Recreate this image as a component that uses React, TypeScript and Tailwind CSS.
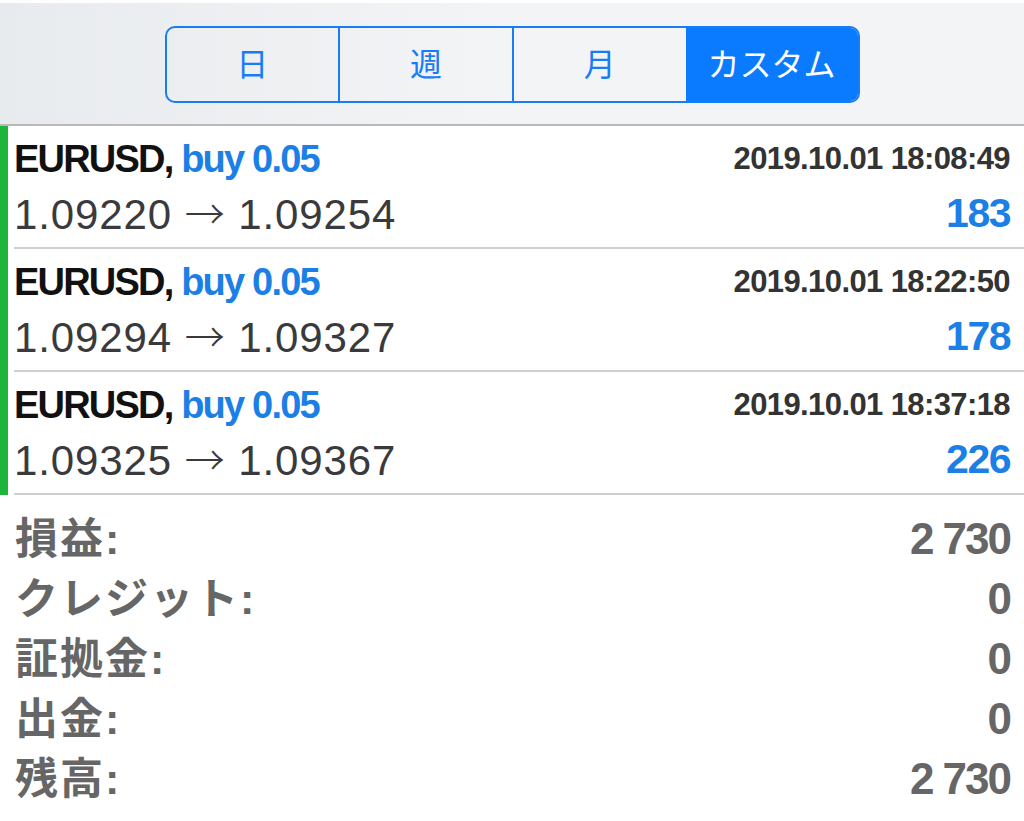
const trades = [
  { time: "2019.10.01 18:08:49", open: "1.09220", close: "1.09254", profit: "183" },
  { time: "2019.10.01 18:22:50", open: "1.09294", close: "1.09327", profit: "178" },
  { time: "2019.10.01 18:37:18", open: "1.09325", close: "1.09367", profit: "226" },
];

const summary = [
  { label: "損益:", value: "2 730" },
  { label: "クレジット:", value: "0" },
  { label: "証拠金:", value: "0" },
  { label: "出金:", value: "0" },
  { label: "残高:", value: "2 730" },
];

const tabs = ["日", "週", "月", "カスタム"];

const font = "font-['Liberation_Sans','Noto_Sans_CJK_JP',sans-serif]";

export default function App() {
  return (
    <div className={`w-[1024px] h-[821px] bg-white overflow-hidden ${font}`}>
      <div className="h-[126px] border-t-[3px] border-white bg-gradient-to-r from-[#e8ebee] via-[#f3f4f6] to-[#f3f4f6] border-b-2 border-b-[#b9b9bb] flex items-center justify-center">
        <div className="flex w-[695px] h-[77px] mt-[2px] rounded-[10px] border-2 border-[#1a7cf4] overflow-hidden">
          {tabs.map((t, i) => (
            <div
              key={t}
              className={`flex-1 flex items-center justify-center text-[32px] ${
                i === 3 ? "bg-[#0a7bff] text-white" : "text-[#1a7cf4]"
              } ${i > 0 && i < 3 ? "border-l-2 border-[#1a7cf4]" : ""}`}
            >
              {t}
            </div>
          ))}
        </div>
      </div>

      <div>
        {trades.map((tr) => (
          <div key={tr.time} className="flex h-[123px]">
            <div className="w-[8px] bg-[#1fb53a]" />
            <div className="flex-1 ml-[6px] pr-[14px] border-b-2 border-[#cfcfd1] flex flex-col justify-center gap-[12px]">
              <div className="flex items-center justify-between h-[42px]">
                <span className="text-[38px] font-bold tracking-[-1.8px] text-[#111]">
                  EURUSD, <span className="text-[#1b7fe6]">buy 0.05</span>
                </span>
                <span className="text-[31px] font-bold tracking-[-0.6px] text-[#333]">{tr.time}</span>
              </div>
              <div className="flex items-center justify-between h-[42px]">
                <span className="text-[42px] text-[#3a3a3c] tracking-[0.9px]">
                  {tr.open}{" "}
                  <span className="font-['Noto_Sans_CJK_JP',sans-serif] text-[40px] font-light">→</span>{" "}
                  {tr.close}
                </span>
                <span className="text-[41px] font-bold tracking-[-1.5px] text-[#1b7fe6]">{tr.profit}</span>
              </div>
            </div>
          </div>
        ))}
      </div>

      <div className="pt-[14px] pl-[15px] pr-[14px]">
        {summary.map((s) => (
          <div key={s.label} className="flex items-center justify-between h-[60px] text-[#666] font-bold">
            <span className="text-[43px] tracking-[2px]">{s.label}</span>
            <span className="text-[44px] tracking-[-2px]">{s.value}</span>
          </div>
        ))}
      </div>
    </div>
  );
}
